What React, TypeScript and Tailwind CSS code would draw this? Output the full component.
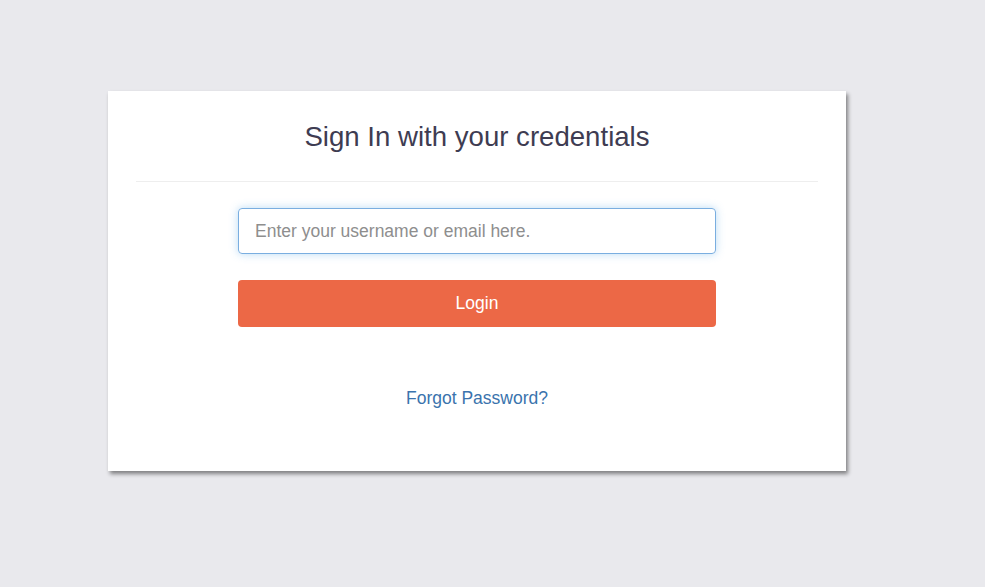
const App = () => {
  return (
    <main
      className="min-h-screen bg-[#e9e9ed] pt-[91px]"
      style={{ fontFamily: '"Liberation Sans", Arial, sans-serif' }}
    >
      <section className="ml-[108px] w-[738px] h-[380px] bg-white shadow-[2px_3px_4px_rgba(0,0,0,0.45)] px-[28px]">
        <h1 className="pt-[29px] pb-[27px] text-center text-[27.6px] leading-[34px] text-[#3e3c52]">
          Sign In with your credentials
        </h1>
        <div className="border-t border-[#eeeeee]" />

        <div className="w-[478px] mx-auto pt-[26px]">
          <input
            type="text"
            placeholder="Enter your username or email here."
            className="w-full h-[46px] rounded-[4px] border border-[#7aaee0] px-[16px] text-[17.5px] text-[#555] placeholder:text-[#8e8e8e] outline-none shadow-[0_0_8px_rgba(102,175,233,0.45)]"
          />
          <button className="mt-[26px] w-full h-[47px] rounded-[4px] bg-[#ec6846] text-white text-[17.5px]">
            Login
          </button>
        </div>

        <div className="mt-[58px] text-center">
          <a href="#" className="text-[17.5px] text-[#3a73ad]">
            Forgot Password?
          </a>
        </div>
      </section>
    </main>
  );
};

export default App;
